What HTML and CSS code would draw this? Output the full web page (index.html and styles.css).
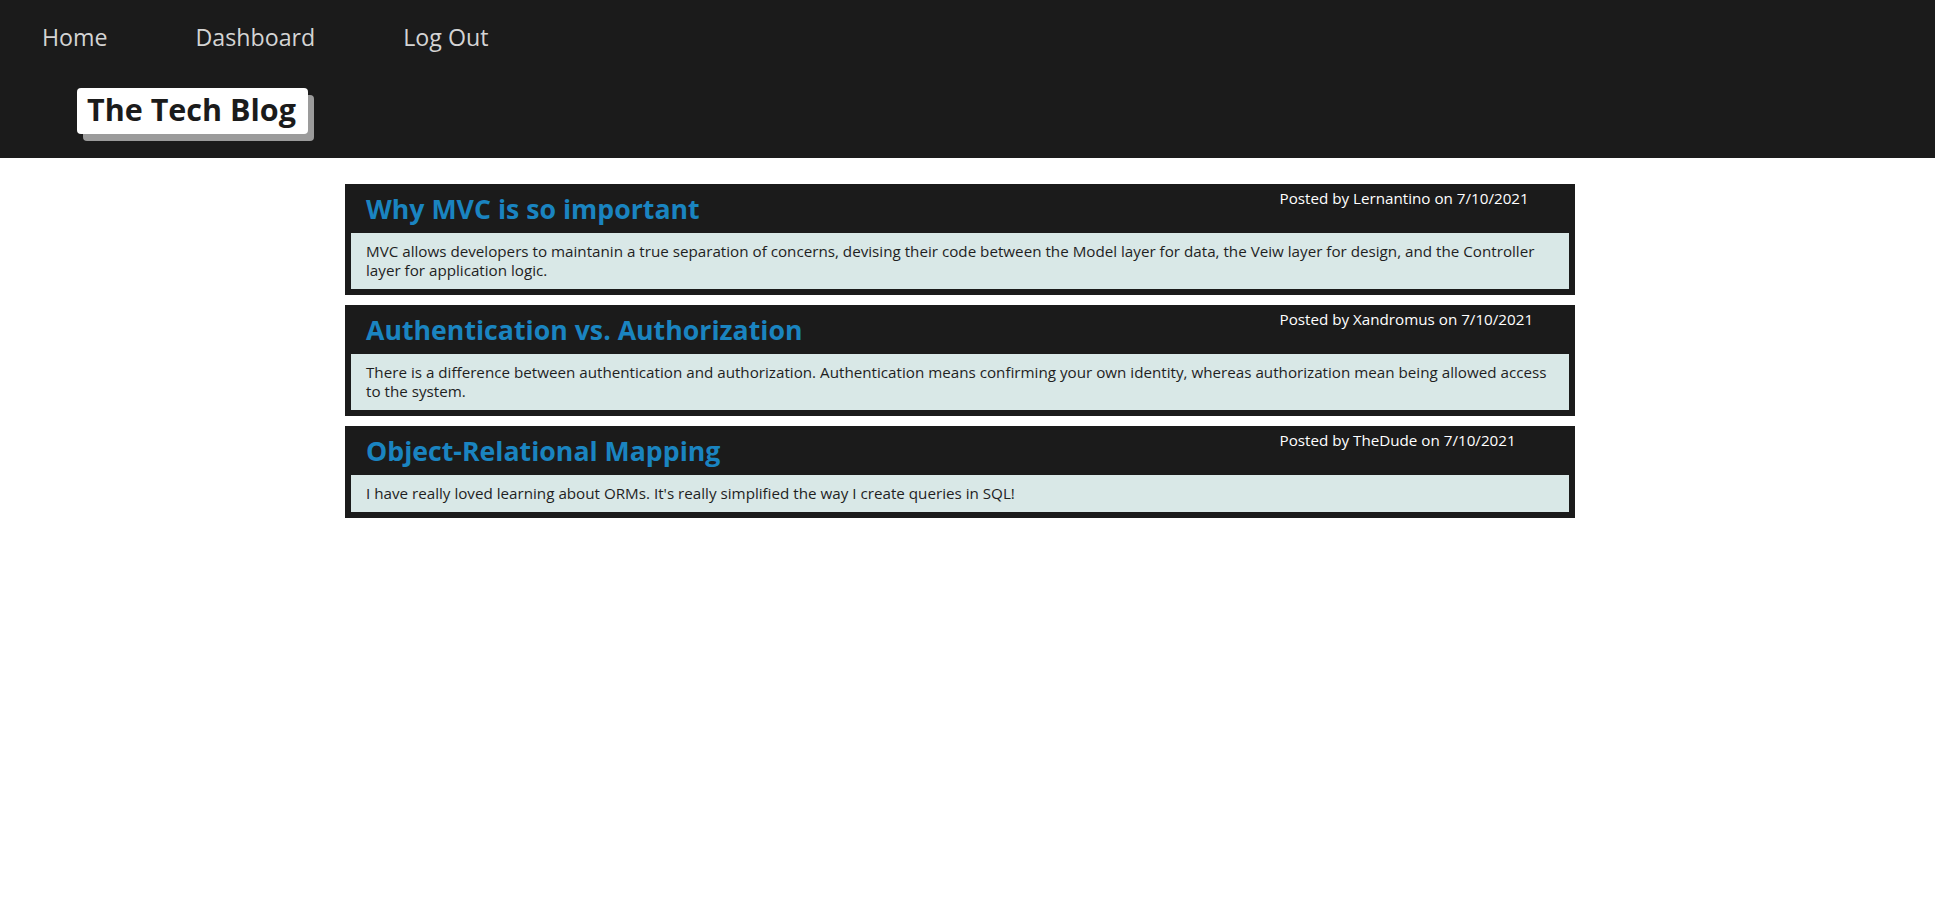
FILE: index.html
```html
<!DOCTYPE html>
<html lang="en">
<head>
<meta charset="utf-8">
<title>The Tech Blog</title>
<link rel="stylesheet" href="styles.css">
</head>
<body>
<header class="site-header">
  <nav class="nav">
    <a class="nav-link" href="#">Home</a>
    <a class="nav-link" href="#">Dashboard</a>
    <a class="nav-link" href="#">Log Out</a>
  </nav>
  <h1 class="brand">The Tech Blog</h1>
</header>
<main class="posts">
  <article class="post">
    <div class="post-head">
      <h2 class="post-title">Why MVC is so important</h2>
      <p class="post-meta">Posted by Lernantino on 7/10/2021</p>
    </div>
    <div class="post-body">MVC allows developers to maintanin a true separation of concerns, devising their code between the Model layer for data, the Veiw layer for design, and the Controller layer for application logic.</div>
  </article>
  <article class="post">
    <div class="post-head">
      <h2 class="post-title">Authentication vs. Authorization</h2>
      <p class="post-meta">Posted by Xandromus on 7/10/2021</p>
    </div>
    <div class="post-body">There is a difference between authentication and authorization. Authentication means confirming your own identity, whereas authorization mean being allowed access to the system.</div>
  </article>
  <article class="post">
    <div class="post-head">
      <h2 class="post-title">Object-Relational Mapping</h2>
      <p class="post-meta">Posted by TheDude on 7/10/2021</p>
    </div>
    <div class="post-body">I have really loved learning about ORMs. It's really simplified the way I create queries in SQL!</div>
  </article>
</main>
</body>
</html>
```

FILE: styles.css
```css
* { box-sizing: border-box; }

body {
  margin: 0;
  font-family: "Open Sans", "Noto Sans", sans-serif;
  background: #ffffff;
  color: #1b1b1b;
}

.site-header {
  background: #1b1b1b;
  height: 158px;
  padding-top: 21px;
}

.nav {
  display: flex;
  gap: 88px;
  padding-left: 42px;
}

.nav-link {
  color: #d4d4d4;
  text-decoration: none;
  font-size: 23.2px;
  line-height: 32px;
}

.brand {
  display: inline-block;
  margin: 35px 0 0 77px;
  padding: 0 12px 4px 10px;
  background: #ffffff;
  color: #1b1b1b;
  font-size: 30.5px;
  font-weight: 700;
  line-height: 42px;
  border-radius: 4px;
  box-shadow: 6px 7px 0 #9b9b9b;
}

.posts {
  display: flex;
  flex-direction: column;
  gap: 10px;
  width: 1230px;
  margin: 26px 0 0 345px;
}

.post {
  background: #1b1b1b;
  padding: 6px;
}

.post-head {
  display: grid;
  grid-template-columns: 3fr 1fr;
  height: 43px;
}

.post-title {
  margin: 0;
  padding: 0 15px;
  color: #1a84c0;
  font-size: 26.7px;
  font-weight: 700;
  line-height: 37px;
}

.post-meta {
  margin: -2px 0 0;
  padding: 0 15px;
  color: #ffffff;
  font-size: 15.2px;
  line-height: 20px;
}

.post-body {
  background: #d9e8e7;
  padding: 9px 18px 9px 15px;
  font-size: 15.2px;
  line-height: 19px;
  color: #1f1f1f;
}
```
